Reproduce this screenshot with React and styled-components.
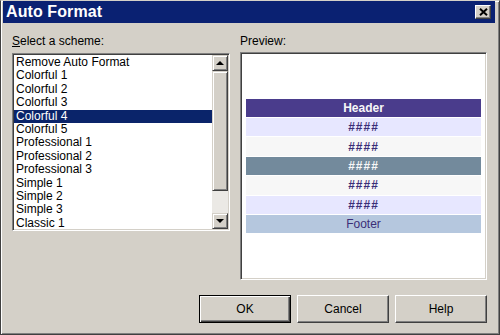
import React from 'react'
import styled, { createGlobalStyle } from 'styled-components'

const GlobalStyle = createGlobalStyle`
  body {
    margin: 0;
    font-family: "Liberation Sans", Arial, sans-serif;
  }
`

const Window = styled.div`
  width: 500px;
  height: 335px;
  box-sizing: border-box;
  background: #d4d0c8;
  border: 1px solid #404040;
  border-top-color: #d4d0c8;
  box-shadow: inset 1px 1px #ffffff, inset -1px -1px #808080;
  padding: 0 4px 0 2px;
  display: flex;
  flex-direction: column;
`

const TitleBar = styled.div`
  height: 22px;
  background: #0a2172;
  display: flex;
  align-items: center;
  justify-content: space-between;
  padding: 0 4px 0 3px;
`

const Title = styled.span`
  color: #fff;
  font-size: 16px;
  font-weight: bold;
  letter-spacing: 0.1px;
`

const CloseButton = styled.div`
  width: 16px;
  height: 14px;
  box-sizing: border-box;
  background: #d4d0c8;
  border: 1px solid;
  border-color: #fff #404040 #404040 #fff;
  box-shadow: inset -1px -1px #808080;
  display: flex;
  align-items: center;
  justify-content: center;
`

const Body = styled.div`
  padding: 11px 0 0 9px;
  display: grid;
  grid-template-columns: 218px 247px;
  column-gap: 10px;
`

const Column = styled.div`
  display: flex;
  flex-direction: column;
`

const Label = styled.div`
  font-size: 12px;
  line-height: 14px;
  color: #000;
  margin-bottom: ${p => p.$gap}px;
  u { text-decoration: underline; }
`

const ListBox = styled.div`
  height: 178px;
  box-sizing: border-box;
  background: #fff;
  border: 1px solid;
  border-color: #808080 #fff #fff #808080;
  box-shadow: inset 1px 1px #404040, inset -1px -1px #d4d0c8;
  padding: 1px;
  display: flex;
  overflow: hidden;
`

const Items = styled.div`
  flex: 1;
  padding-top: 1px;
  overflow: hidden;
`

const Item = styled.div`
  height: 13.4px;
  line-height: 13.4px;
  font-size: 12px;
  padding-left: 2px;
  white-space: nowrap;
  color: ${p => (p.$selected ? '#fff' : '#000')};
  background: ${p => (p.$selected ? '#0a246a' : 'transparent')};
`

const ScrollBar = styled.div`
  width: 16px;
  display: flex;
  flex-direction: column;
  background: #ebe9e5;
`

const ScrollButton = styled.div`
  height: ${p => p.$h}px;
  box-sizing: border-box;
  background: #d4d0c8;
  border: 1px solid;
  border-color: #d4d0c8 #404040 #404040 #d4d0c8;
  box-shadow: inset 1px 1px #fff, inset -1px -1px #808080;
  display: flex;
  align-items: center;
  justify-content: center;
`

const Track = styled.div`
  flex: 1;
`

const Arrow = styled.div`
  width: 0;
  height: 0;
  border-left: 4px solid transparent;
  border-right: 4px solid transparent;
  ${p => (p.$down ? 'border-top: 4px solid #000;' : 'border-bottom: 4px solid #000;')}
`

const Preview = styled.div`
  height: 228px;
  box-sizing: border-box;
  background: #fff;
  border: 1px solid;
  border-color: #808080 #fff #fff #808080;
  box-shadow: inset 1px 1px #404040, inset -1px -1px #d4d0c8;
  padding: 2px 5px;
  display: flex;
  flex-direction: column;
  justify-content: center;
`

const Grid = styled.div`
  display: flex;
  flex-direction: column;
  gap: 1px;
`

const variants = {
  header: { bg: '#4a3c8c', color: '#f7f7f7', weight: 'bold', spacing: 0 },
  item: { bg: '#e7e7ff', color: '#3b2f78', weight: 'bold', spacing: 1 },
  alt: { bg: '#f7f7f7', color: '#3b2f78', weight: 'bold', spacing: 1 },
  selected: { bg: '#738a9c', color: '#f7f7f7', weight: 'bold', spacing: 1 },
  footer: { bg: '#b5c7de', color: '#3b2f78', weight: 'normal', spacing: 0 },
}

const GridRow = styled.div`
  height: 18.4px;
  display: flex;
  align-items: center;
  justify-content: center;
  font-size: 12px;
  background: ${p => variants[p.$variant].bg};
  color: ${p => variants[p.$variant].color};
  font-weight: ${p => variants[p.$variant].weight};
  letter-spacing: ${p => variants[p.$variant].spacing}px;
`

const Buttons = styled.div`
  grid-column: 1 / 3;
  display: flex;
  justify-content: flex-end;
  gap: 6px;
  margin-top: 15px;
`

const Button = styled.div`
  width: 92px;
  height: 28px;
  box-sizing: border-box;
  background: #d4d0c8;
  font-size: 12px;
  display: flex;
  align-items: center;
  justify-content: center;
  border: 1px solid;
  border-color: ${p => (p.$default ? '#000' : '#fff #404040 #404040 #fff')};
  box-shadow: ${p =>
    p.$default
      ? 'inset 1px 1px #fff, inset -1px -1px #404040, inset -2px -2px #808080'
      : 'inset -1px -1px #808080'};
`

const schemes = [
  'Remove Auto Format',
  'Colorful 1',
  'Colorful 2',
  'Colorful 3',
  'Colorful 4',
  'Colorful 5',
  'Professional 1',
  'Professional 2',
  'Professional 3',
  'Simple 1',
  'Simple 2',
  'Simple 3',
  'Classic 1',
]

const rows = [
  ['header', 'Header'],
  ['item', '####'],
  ['alt', '####'],
  ['selected', '####'],
  ['alt', '####'],
  ['item', '####'],
  ['footer', 'Footer'],
]

export default function App() {
  return (
    <>
      <GlobalStyle />
      <Window>
        <TitleBar>
          <Title>Auto Format</Title>
          <CloseButton>
            <svg width="9" height="8" viewBox="0 0 9 8">
              <path d="M1 0.8 L8 7.2 M8 0.8 L1 7.2" stroke="#000" strokeWidth="2" />
            </svg>
          </CloseButton>
        </TitleBar>
        <Body>
          <Column>
            <Label $gap={5}><u>S</u>elect a scheme:</Label>
            <ListBox>
              <Items>
                {schemes.map(name => (
                  <Item key={name} $selected={name === 'Colorful 4'}>{name}</Item>
                ))}
              </Items>
              <ScrollBar>
                <ScrollButton $h={16}><Arrow /></ScrollButton>
                <ScrollButton $h={120} />
                <Track />
                <ScrollButton $h={16}><Arrow $down /></ScrollButton>
              </ScrollBar>
            </ListBox>
          </Column>
          <Column>
            <Label $gap={4}>Preview:</Label>
            <Preview>
              <Grid>
                {rows.map(([variant, text], i) => (
                  <GridRow key={i} $variant={variant}>{text}</GridRow>
                ))}
              </Grid>
            </Preview>
          </Column>
          <Buttons>
            <Button $default>OK</Button>
            <Button>Cancel</Button>
            <Button>Help</Button>
          </Buttons>
        </Body>
      </Window>
    </>
  )
}
